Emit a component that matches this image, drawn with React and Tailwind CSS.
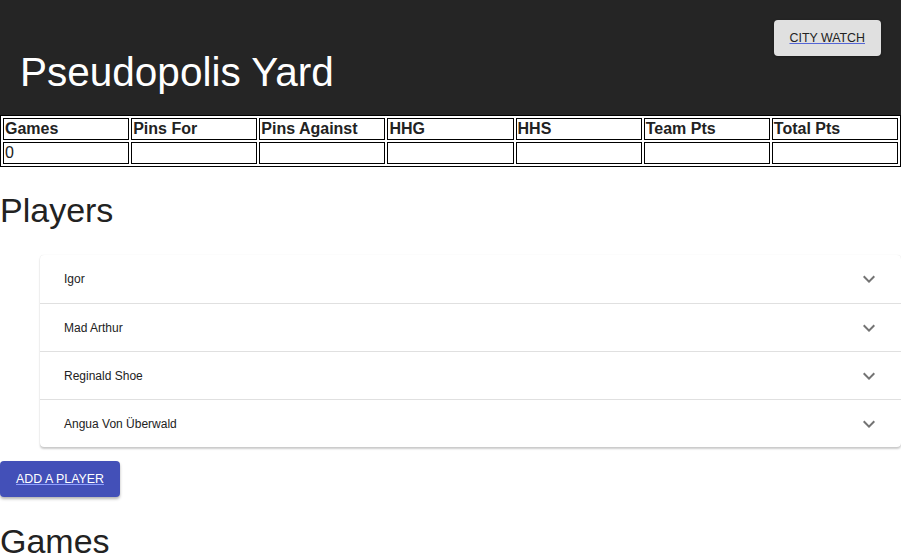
import React from 'react';

const columns = ['Games', 'Pins For', 'Pins Against', 'HHG', 'HHS', 'Team Pts', 'Total Pts'];
const values = ['0', '', '', '', '', '', ''];
const players = ['Igor', 'Mad Arthur', 'Reginald Shoe', 'Angua Von Überwald'];

const ExpandMore = () => (
    <svg width="24" height="24" viewBox="0 0 24 24" className="fill-black/55">
        <path d="M16.59 8.59L12 13.17 7.41 8.59 6 10l6 6 6-6z" />
    </svg>
);

const App = () => {
    return (
        <div className="min-h-screen bg-white text-[#222] font-['Liberation_Sans',Arial,sans-serif]">
            <header className="h-[115px] bg-[#252525] flex justify-between px-5">
                <h1 className="self-end mb-[20px] text-[40.5px] leading-[46px] text-white font-normal">Pseudopolis Yard</h1>
                <button className="mt-5 h-9 px-4 rounded bg-[#e0e0e0] text-[12.4px] text-[#222] underline decoration-[#5465d6] shadow-[0_1px_3px_rgba(0,0,0,0.3)]">
                    CITY WATCH
                </button>
            </header>

            <table className="w-full table-fixed border border-black border-separate border-spacing-[2px]">
                <thead>
                    <tr>
                        {columns.map((col) => (
                            <th key={col} className="border border-black text-left font-bold text-base leading-[20px] px-px">
                                {col}
                            </th>
                        ))}
                    </tr>
                </thead>
                <tbody>
                    <tr>
                        {values.map((val, i) => (
                            <td key={i} className="border border-black text-base leading-[20px] px-px">
                                {val}
                            </td>
                        ))}
                    </tr>
                </tbody>
            </table>

            <h2 className="mt-6 text-[34px] leading-[39px] font-normal">Players</h2>

            <div className="mt-[25px] ml-10 rounded shadow-[0_2px_2px_rgba(0,0,0,0.2),0_0_1px_rgba(0,0,0,0.15)] bg-white">
                {players.map((p, i) => (
                    <div
                        key={p}
                        className={`h-12 flex items-center justify-between pl-6 pr-5 ${i > 0 ? 'border-t border-[#e0e0e0]' : ''}`}
                    >
                        <span className="text-[12px] text-[#222]">{p}</span>
                        <ExpandMore />
                    </div>
                ))}
            </div>

            <button className="mt-[14px] h-9 w-[120px] rounded bg-[#4350b8] text-white text-[12.4px] underline decoration-[#8fa0ff] shadow-[0_2px_3px_rgba(0,0,0,0.3)]">
                ADD A PLAYER
            </button>

            <h2 className="mt-[25px] text-[34px] leading-[39px] font-normal">Games</h2>
        </div>
    );
};

export default App;
